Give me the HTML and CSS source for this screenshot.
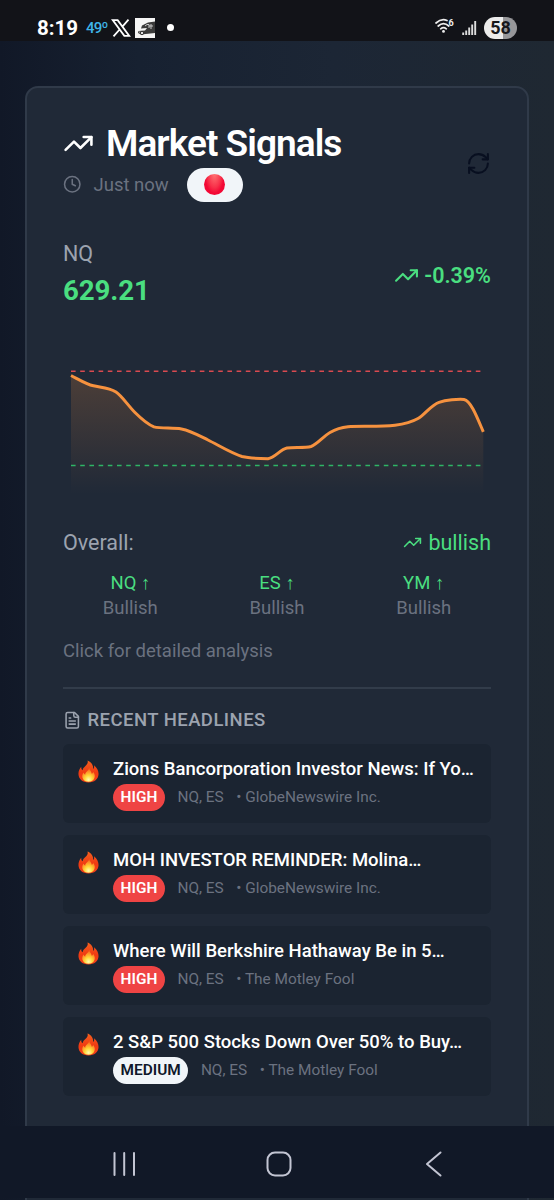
FILE: index.html
```html
<!DOCTYPE html>
<html lang="en">
<head>
  <meta charset="UTF-8">
  <meta name="viewport" content="width=device-width, initial-scale=1">
  <title>Market Signals</title>
  <link rel="stylesheet" href="styles.css">
</head>
<body>

  <!-- Shared icons -->
  <svg class="sprite">
    <linearGradient id="flameOuter" x1="0" y1="0" x2="0" y2="1">
      <stop offset="0" stop-color="#f4611e"/>
      <stop offset="0.55" stop-color="#f03a12"/>
      <stop offset="1" stop-color="#f5421a"/>
    </linearGradient>
    <radialGradient id="flameInner" cx="0.5" cy="0.85" r="0.75">
      <stop offset="0" stop-color="#fffbb0"/>
      <stop offset="0.4" stop-color="#ffd83a"/>
      <stop offset="1" stop-color="#fb6a1c"/>
    </radialGradient>
    <symbol id="trend" viewBox="0 0 24 24">
      <polyline points="22 7 13.5 15.5 8.5 10.5 2 17"/>
      <polyline points="16 7 22 7 22 13"/>
    </symbol>
    <symbol id="fire" viewBox="0 0 22 24">
      <path fill="url(#flameOuter)" d="M10 0.5C14 2 16.3 5.5 15.8 9.3C17 8.6 17.1 7 16.8 5.4C20 8 21.7 11.6 21.5 15C21.2 20.4 17 23.5 11 23.5C5 23.5 0.8 20.4 0.5 15C0.3 11.8 1.6 9 3.4 7C3.3 8.8 3.7 10 4.9 10.7C5 6.8 11.5 5.5 10 0.5Z"/>
      <path fill="url(#flameInner)" d="M11.6 8.2C12.2 11 14 11.8 14.4 14.3C15.4 13.9 15.7 13 15.8 12.2C17.5 14.2 18 16.2 17.4 18.3C16.5 21.4 14 22.8 11 22.8C7.8 22.8 5.2 21.2 4.6 18.3C4.2 16.3 4.8 14.6 5.9 13.1C6.1 14.3 6.6 15 7.6 15.3C7.4 12.5 11.6 11.4 11.6 8.2Z"/>
    </symbol>
  </svg>

  <div class="phone">
    <header class="status-bar">
      <div class="status-left">
        <span class="time">8:19</span>
        <span class="temp">49º</span>
        <svg class="x-logo" viewBox="0 0 24 24"><path d="M2 2.5H8L22 21.5H16ZM21 2L13.4 10.6M10.6 13.5L3 22"/></svg>
        <svg class="car" viewBox="0 0 20 20">
          <rect width="20" height="20" fill="#f5f5f5"/>
          <path fill="#3a3a3a" d="M20 3.5L13 4.5L7 7.5L6 10.5L12 10L10 12.5L3.5 13L3 15L6 16.5L20 15Z"/>
          <path stroke="#c8c8c8" fill="none" d="M10 8L12 6.5H14V10M16 6V11M4 14L9 15M14 8H18"/>
          <circle cx="7" cy="15" r="1.7" fill="#ddd" stroke="#333"/>
        </svg>
        <span class="dot"></span>
      </div>
      <div class="status-right">
        <svg class="wifi" viewBox="0 0 20 16">
          <path d="M1 5Q6.5 0 12 2.5M3.2 8Q8.5 3.4 13.8 8M5.7 10.8Q8.5 8.5 11.3 10.8"/>
          <circle cx="8.5" cy="13.4" r="1.4"/>
          <text x="13.6" y="8">6</text>
        </svg>
        <svg class="signal" viewBox="0 0 15 16"><path d="M1.2 15V12.5M4.2 15V10.5M7.2 15V7.5M10.2 15V4.5M13.2 15V1"/></svg>
        <span class="battery">58</span>
      </div>
    </header>

    <main class="content">
      <section class="card">
        <div class="card-header">
          <div>
            <h1><svg class="icon title-icon"><use href="#trend"/></svg><span>Market Signals</span></h1>
            <div class="updated">
              <svg class="icon clock" viewBox="0 0 24 24"><circle cx="12" cy="12" r="10"/><polyline points="12 6 12 12 16 14"/></svg>
              <span>Just now</span>
              <span class="live-pill"><i></i></span>
            </div>
          </div>
          <svg class="icon refresh" viewBox="0 0 24 24">
            <path d="M3 12a9 9 0 0 1 9-9 9.75 9.75 0 0 1 6.74 2.74L21 8"/>
            <path d="M21 3v5h-5"/>
            <path d="M21 12a9 9 0 0 1-9 9 9.75 9.75 0 0 1-6.74-2.74L3 16"/>
            <path d="M8 16H3v5"/>
          </svg>
        </div>

        <div class="quote">
          <div>
            <div class="symbol">NQ</div>
            <div class="price">629.21</div>
          </div>
          <div class="change"><svg class="icon"><use href="#trend"/></svg><span>-0.39%</span></div>
        </div>

        <svg class="chart" viewBox="0 0 428 150">
          <defs>
            <linearGradient id="area" gradientUnits="userSpaceOnUse" x1="0" y1="30" x2="0" y2="149">
              <stop offset="0" stop-color="#fb923c" stop-opacity="0.2"/>
              <stop offset="1" stop-color="#fb923c" stop-opacity="0"/>
            </linearGradient>
          </defs>
          <path fill="url(#area)" d="M8 30.5C15 34 23 39 30.5 40.8C38 42.5 46 42.5 53 47C59 51 65 60.5 72 67.5C78 73.5 84 79 91 81.9C98 83.7 110 82.5 118.5 84C127 85.5 136 90.5 145 95C156 100.5 168 108 179 111.5C187 113.4 197 113.6 205 113.7C212 112.7 217 104.5 224 103C231 101.8 241 103.3 248 101.5C254 99.5 260 91.5 267 87.5C273 83.9 279 82.2 285 81.7C298 80.7 316 82.2 332 80.2C340 79.2 348 77.5 355 73.5C362 69.5 368 60 376 57.3C383 55 395 54 401 54.5C408 56 414 72 420.3 86.9V149H8Z"/>
          <path class="limit high" d="M8 26.2H420"/>
          <path class="limit low" d="M8 120.5H420"/>
          <path class="line" d="M8 30.5C15 34 23 39 30.5 40.8C38 42.5 46 42.5 53 47C59 51 65 60.5 72 67.5C78 73.5 84 79 91 81.9C98 83.7 110 82.5 118.5 84C127 85.5 136 90.5 145 95C156 100.5 168 108 179 111.5C187 113.4 197 113.6 205 113.7C212 112.7 217 104.5 224 103C231 101.8 241 103.3 248 101.5C254 99.5 260 91.5 267 87.5C273 83.9 279 82.2 285 81.7C298 80.7 316 82.2 332 80.2C340 79.2 348 77.5 355 73.5C362 69.5 368 60 376 57.3C383 55 395 54 401 54.5C408 56 414 72 420.3 86.9"/>
        </svg>

        <div class="overall">
          <span>Overall:</span>
          <span class="bullish"><svg class="icon"><use href="#trend"/></svg>bullish</span>
        </div>

        <div class="indices">
          <div><b>NQ ↑</b><span>Bullish</span></div>
          <div><b>ES ↑</b><span>Bullish</span></div>
          <div><b>YM ↑</b><span>Bullish</span></div>
        </div>

        <p class="hint">Click for detailed analysis</p>

        <div class="headlines">
          <h2>
            <svg class="icon" viewBox="0 0 24 24"><path d="M15 2H6a2 2 0 0 0-2 2v16a2 2 0 0 0 2 2h12a2 2 0 0 0 2-2V7Z"/><path d="M14 2v4a2 2 0 0 0 2 2h4M10 9H8M16 13H8M16 17H8"/></svg>
            <span>RECENT HEADLINES</span>
          </h2>

          <article class="news">
            <svg class="fire"><use href="#fire"/></svg>
            <div>
              <h3>Zions Bancorporation Investor News: If Yo…</h3>
              <div class="meta"><span class="badge high">HIGH</span><span>NQ, ES</span><span class="source">• GlobeNewswire Inc.</span></div>
            </div>
          </article>
          <article class="news">
            <svg class="fire"><use href="#fire"/></svg>
            <div>
              <h3>MOH INVESTOR REMINDER: Molina…</h3>
              <div class="meta"><span class="badge high">HIGH</span><span>NQ, ES</span><span class="source">• GlobeNewswire Inc.</span></div>
            </div>
          </article>
          <article class="news">
            <svg class="fire"><use href="#fire"/></svg>
            <div>
              <h3>Where Will Berkshire Hathaway Be in 5…</h3>
              <div class="meta"><span class="badge high">HIGH</span><span>NQ, ES</span><span class="source">• The Motley Fool</span></div>
            </div>
          </article>
          <article class="news">
            <svg class="fire"><use href="#fire"/></svg>
            <div>
              <h3>2 S&amp;P 500 Stocks Down Over 50% to Buy…</h3>
              <div class="meta"><span class="badge medium">MEDIUM</span><span>NQ, ES</span><span class="source">• The Motley Fool</span></div>
            </div>
          </article>
        </div>
      </section>
    </main>

    <nav class="nav-bar">
      <svg viewBox="0 0 26 26"><path d="M2.5 2V24M12.2 2V24M22 2V24"/></svg>
      <svg viewBox="0 0 26 26"><rect x="1.5" y="1.5" width="23" height="23" rx="7.5"/></svg>
      <svg viewBox="0 0 26 26"><path d="M20.5 1.5L7 13L20.5 24.5"/></svg>
    </nav>
  </div>

</body>
</html>
```
FILE: styles.css
```css
* {
  box-sizing: border-box;
}

body {
  margin: 0;
  font-family: Roboto, "Liberation Sans", sans-serif;
  background: #111827;
  color: #fff;
}

h1, h2, h3, p {
  margin: 0;
}

.sprite {
  position: absolute;
  width: 0;
  height: 0;
}

.icon {
  fill: none;
  stroke: currentColor;
  stroke-width: 2;
  stroke-linecap: round;
  stroke-linejoin: round;
  flex: none;
}

.phone {
  position: relative;
  display: flex;
  flex-direction: column;
  height: 1200px;
  overflow: hidden;
}

/* Status bar */
.status-bar {
  flex: none;
  height: 41px;
  padding: 14px 37px 0;
  background: #121318;
  display: flex;
  justify-content: space-between;
}

.status-left,
.status-right {
  display: flex;
  align-items: center;
  height: 27px;
}

.time {
  width: 40px;
  font-size: 20.5px;
  font-weight: 700;
}

.temp {
  width: 20px;
  margin-left: 9px;
  font-size: 15px;
  font-weight: 500;
  letter-spacing: -0.8px;
  color: #3fb4e8;
}

.x-logo {
  width: 20px;
  height: 20px;
  margin-left: 5px;
  fill: none;
  stroke: #fff;
  stroke-width: 2.2;
}

.car {
  width: 20px;
  height: 20px;
  margin-left: 4px;
}

.dot {
  width: 7px;
  height: 7px;
  margin-left: 12px;
  border-radius: 50%;
  background: #fff;
}

.wifi {
  width: 20px;
  height: 16px;
  margin-top: -3px;
  fill: none;
  stroke: #eee;
  stroke-width: 1.7;
  stroke-linecap: round;
}

.wifi circle,
.wifi text {
  fill: #eee;
  stroke: none;
  font-size: 9px;
  font-weight: 700;
}

.signal {
  width: 15px;
  height: 16px;
  margin-left: 7px;
  fill: none;
  stroke: #ddd;
  stroke-width: 1.9;
}

.battery {
  width: 33px;
  height: 22px;
  margin-left: 7px;
  border-radius: 11px;
  background: linear-gradient(90deg, #ececec 57%, #97979a 57%);
  color: #17181c;
  font-size: 18px;
  font-weight: 700;
  line-height: 22px;
  text-align: center;
}

/* Card */
.content {
  flex: 1;
  padding: 45px 25px 0;
  background: linear-gradient(90deg, #111827 0%, #172131 25%, #1c2635 60%, #1f2832 100%);
}

.card {
  height: 1200px;
  padding: 35px 36px 0;
  border: 2px solid #303a49;
  border-radius: 13px;
  background: #202937;
}

.card-header {
  display: flex;
  justify-content: space-between;
  height: 116px;
}

h1 {
  display: flex;
  align-items: center;
  height: 40px;
  font-size: 37px;
  font-weight: 600;
  letter-spacing: -0.95px;
}

.title-icon {
  width: 31px;
  height: 31px;
  margin-right: 12px;
}

.updated {
  display: flex;
  align-items: center;
  height: 43px;
  color: #6b7280;
  font-size: 18.5px;
}

.clock {
  width: 18.5px;
  height: 18.5px;
  margin-right: 12px;
}

.live-pill {
  display: flex;
  align-items: center;
  justify-content: center;
  width: 56px;
  height: 34px;
  margin-left: 18px;
  border-radius: 17px;
  background: #f1f5f9;
}

.live-pill i {
  width: 21px;
  height: 21px;
  border-radius: 50%;
  background: radial-gradient(ellipse at 50% 0%, #ff7474 0%, #f8314a 45%, #f30835 65%);
}

.refresh {
  width: 25px;
  height: 25px;
  margin-top: 28px;
  color: #080f20;
}

.quote {
  display: flex;
  justify-content: space-between;
  height: 106px;
}

.symbol {
  height: 30px;
  color: #9ca3af;
  font-size: 21.5px;
  line-height: 30px;
}

.price {
  color: #4ade80;
  font-size: 27.7px;
  font-weight: 700;
  letter-spacing: -0.1px;
  line-height: 44px;
}

.change,
.bullish {
  display: flex;
  align-items: center;
  color: #4ade80;
}

.change {
  height: 72px;
  font-size: 21.5px;
  font-weight: 600;
}

.change .icon {
  width: 25px;
  height: 25px;
  margin-right: 5px;
}

.chart {
  display: block;
  width: 428px;
  height: 150px;
}

.chart .line {
  fill: none;
  stroke: #f6923f;
  stroke-width: 3;
}

.limit {
  fill: none;
  stroke-width: 1.6;
  stroke-dasharray: 4.6 4.6;
}

.limit.high {
  stroke: #d94a50;
}

.limit.low {
  stroke: #2fb565;
}

.overall {
  display: flex;
  justify-content: space-between;
  align-items: center;
  height: 32px;
  margin-top: 31px;
  color: #9ca3af;
  font-size: 21.5px;
}

.bullish .icon {
  width: 19px;
  height: 19px;
  margin-right: 6px;
}

.indices {
  display: grid;
  grid-template-columns: repeat(3, 1fr);
  gap: 12px;
  margin-top: 13px;
  text-align: center;
  font-size: 18.5px;
  line-height: 25px;
}

.indices b {
  display: block;
  color: #4ade80;
  font-weight: 400;
}

.indices span,
.hint {
  color: #6b7280;
}

.hint {
  margin-top: 18px;
  font-size: 18.5px;
  line-height: 25px;
}

/* Headlines */
.headlines {
  margin-top: 23px;
  border-top: 2px solid #323c4a;
}

h2 {
  display: flex;
  align-items: center;
  height: 55px;
  padding-top: 7px;
  color: #9ca3af;
  font-size: 18.5px;
  font-weight: 500;
  letter-spacing: 0.46px;
}

h2 .icon {
  width: 18.5px;
  height: 18.5px;
  margin-right: 6px;
}

.news {
  display: flex;
  height: 79px;
  margin-bottom: 12px;
  padding: 12px 13px;
  border-radius: 6px;
  background: #1b2431;
}

.fire {
  width: 21px;
  height: 23px;
  margin: 4px 14px 0 2px;
}

h3 {
  height: 27px;
  font-size: 18.5px;
  font-weight: 500;
  line-height: 26px;
  white-space: nowrap;
}

.meta {
  display: flex;
  align-items: center;
  height: 28px;
  color: #6b7280;
  font-size: 15.4px;
}

.badge {
  height: 27px;
  margin-right: 12.5px;
  padding: 0 7.6px;
  border-radius: 14px;
  font-weight: 600;
  line-height: 27px;
}

.badge.high {
  background: #ef4444;
  color: #fff;
}

.badge.medium {
  background: #f1f5f9;
  color: #0f172a;
}

.source {
  margin-left: 12.5px;
}

/* Android navigation, floats over the page */
.nav-bar {
  position: absolute;
  left: 0;
  right: 0;
  bottom: 2px;
  height: 72px;
  padding: 3px 44px 0 48px;
  background: #111827;
  display: flex;
  align-items: center;
  justify-content: space-around;
}

.nav-bar svg {
  width: 26px;
  height: 26px;
  fill: none;
  stroke: #c3c5d3;
  stroke-width: 2;
  stroke-linecap: round;
  stroke-linejoin: round;
}
```
